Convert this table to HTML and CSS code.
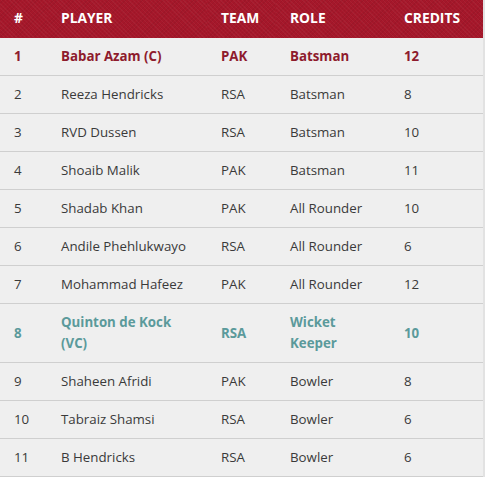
FILE: index.html
```html
<!DOCTYPE html>
<html>
<head>
<meta charset="utf-8">
<link rel="stylesheet" href="styles.css">
</head>
<body>
<table class="squad">
  <colgroup>
    <col class="c-num"><col class="c-player"><col class="c-team"><col class="c-role"><col class="c-credits">
  </colgroup>
  <thead>
    <tr><th>#</th><th>PLAYER</th><th>TEAM</th><th>ROLE</th><th>CREDITS</th></tr>
  </thead>
  <tbody>
    <tr class="captain"><td>1</td><td>Babar Azam (C)</td><td>PAK</td><td>Batsman</td><td>12</td></tr>
    <tr><td>2</td><td>Reeza Hendricks</td><td>RSA</td><td>Batsman</td><td>8</td></tr>
    <tr><td>3</td><td>RVD Dussen</td><td>RSA</td><td>Batsman</td><td>10</td></tr>
    <tr><td>4</td><td>Shoaib Malik</td><td>PAK</td><td>Batsman</td><td>11</td></tr>
    <tr><td>5</td><td>Shadab Khan</td><td>PAK</td><td>All Rounder</td><td>10</td></tr>
    <tr><td>6</td><td>Andile Phehlukwayo</td><td>RSA</td><td>All Rounder</td><td>6</td></tr>
    <tr><td>7</td><td>Mohammad Hafeez</td><td>PAK</td><td>All Rounder</td><td>12</td></tr>
    <tr class="vice"><td>8</td><td>Quinton de Kock (VC)</td><td>RSA</td><td>Wicket Keeper</td><td>10</td></tr>
    <tr><td>9</td><td>Shaheen Afridi</td><td>PAK</td><td>Bowler</td><td>8</td></tr>
    <tr><td>10</td><td>Tabraiz Shamsi</td><td>RSA</td><td>Bowler</td><td>6</td></tr>
    <tr><td>11</td><td>B Hendricks</td><td>RSA</td><td>Bowler</td><td>6</td></tr>
  </tbody>
</table>
</body>
</html>
```
FILE: styles.css
```css
html, body {
  margin: 0;
  padding: 0;
  background: #ffffff;
}
.squad {
  width: 484px;
  table-layout: fixed;
  border-collapse: collapse;
  font-family: "Open Sans", "DejaVu Sans", sans-serif;
  font-size: 13.3px;
  line-height: 21px;
  color: #3a3a3a;
  background: #efefef;
  border-right: 2px solid #e2e2e2;
}
.c-num { width: 47px; }
.c-player { width: 160px; }
.c-team { width: 69px; }
.c-role { width: 114px; }
.c-credits { width: 94px; }
.squad th {
  text-align: left;
  font-weight: 700;
  font-size: 13.8px;
  line-height: 21px;
  color: #ffffff;
  padding: 7px 14px 10px;
  background-color: #a5172a;
  background-image:
    repeating-linear-gradient(45deg, rgba(255,255,255,0.04) 0 1px, transparent 1px 3px),
    repeating-linear-gradient(-45deg, rgba(0,0,0,0.05) 0 1px, transparent 1px 3px);
}
.squad td {
  padding: 8px 14px;
  vertical-align: middle;
  border-bottom: 1px solid #cfcfcf;
}
.squad .captain td {
  color: #8e1b2d;
  font-weight: 700;
}
.squad .vice td {
  color: #5b9a9b;
  font-weight: 700;
}
```
